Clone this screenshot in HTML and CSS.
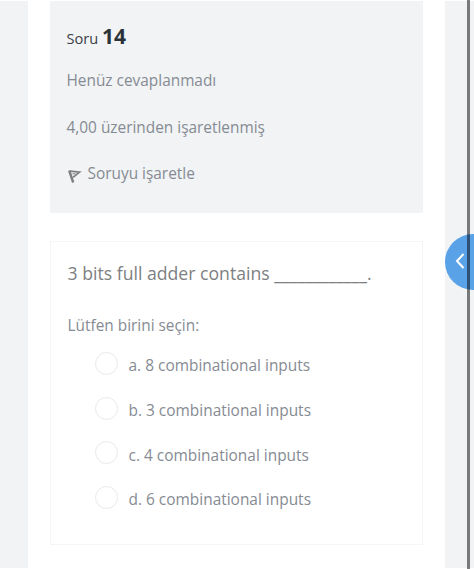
FILE: index.html
```html
<!DOCTYPE html>
<html lang="tr">
<head>
<meta charset="utf-8">
<title>Soru 14</title>
<link rel="stylesheet" href="styles.css">
</head>
<body>
<div class="page">
  <main class="content">
    <section class="info">
      <h3 class="number">Soru <b>14</b></h3>
      <p class="line"><span>Henüz cevaplanmadı</span></p>
      <p class="line"><span>4,00 üzerinden işaretlenmiş</span></p>
      <p class="line flag">
        <svg width="14" height="15" viewBox="0 0 14 15" fill="none" stroke="#7d7f80"><path d="M1.200 1.500 5.200 13.500" stroke-width="2.400"/><path d="M2 2.200 11.500 3.200 5 8.300" stroke-width="1.700"/><path d="M4.500 4.800h3" stroke-width="1"/></svg>
        <span>Soruyu işaretle</span>
      </p>
    </section>
    <section class="question">
      <p class="text">3 bits full adder contains <span class="blank">____________</span>.</p>
      <p class="prompt">Lütfen birini seçin:</p>
      <ul class="answers">
        <li><i class="radio"></i><span>a. 8 combinational inputs</span></li>
        <li><i class="radio"></i><span>b. 3 combinational inputs</span></li>
        <li><i class="radio"></i><span>c. 4 combinational inputs</span></li>
        <li><i class="radio"></i><span>d. 6 combinational inputs</span></li>
      </ul>
    </section>
  </main>
  <div class="drawer">
    <svg width="10" height="16" viewBox="0 0 10 16" fill="none" stroke="#fff" stroke-width="2"><path d="M8.500 1 2 8l6.500 7"/></svg>
  </div>
  <div class="scrollbar"></div>
</div>
</body>
</html>
```

FILE: styles.css
```css
* { box-sizing: border-box; margin: 0; padding: 0; }
body {
  width: 474px;
  height: 569px;
  overflow: hidden;
  background: #fff;
  color: #868b93;
  font: 15.4px/24px "Open Sans", sans-serif;
}
.page {
  position: relative;
  height: 569px;
  overflow: hidden;
  padding: 1px 0;
  background: linear-gradient(#f1f3f5, #f1f3f5) 0 1px / 100% 567px no-repeat;
}
.content {
  width: 417px;
  height: 568px;
  margin-left: 28px;
  padding: 0 22px;
  background: #fff;
}
.info {
  height: 212px;
  padding: 22px 16.5px 0;
  background: #f1f3f5;
  white-space: nowrap;
}
.number {
  height: 32px;
  margin-bottom: 14px;
  color: #3a4147;
  font-size: 14.6px;
  font-weight: 400;
  line-height: 26px;
}
.number b { font-size: 21px; color: #2b3338; }
.line { height: 24px; margin-bottom: 22.5px; }
.flag { display: flex; gap: 5px; }
.flag svg { margin: 7px 0 0 1px; }
.flag span { margin-left: 1px; }
.question {
  height: 304px;
  margin-top: 28px;
  padding: 18px 16.5px 0;
  border: 1px solid #f5f5f6;
  white-space: nowrap;
}
.text { height: 26px; color: #7d7f82; font-size: 17.65px; line-height: 26px; }
.prompt { height: 24px; margin-top: 28px; font-size: 15.4px; }
.answers { margin-top: 3px; list-style: none; font-size: 15.45px; }
.answers li {
  display: flex;
  align-items: center;
  gap: 11px;
  height: 44.7px;
  padding-left: 27px;
}
.answers span { padding-top: 4px; }
.radio {
  width: 23px;
  height: 23px;
  border: 1.5px solid #e9e9eb;
  border-radius: 50%;
}
.drawer {
  position: absolute;
  left: 445px;
  top: 234px;
  width: 29px;
  height: 56px;
  border-radius: 28px 0 0 28px;
  background: #5aa2e8;
}
.drawer svg { position: absolute; left: 10px; top: 19px; }
.scrollbar {
  position: absolute;
  left: 467px;
  top: 0;
  width: 3px;
  height: 569px;
  background: rgba(0, 0, 0, .5);
}
```
